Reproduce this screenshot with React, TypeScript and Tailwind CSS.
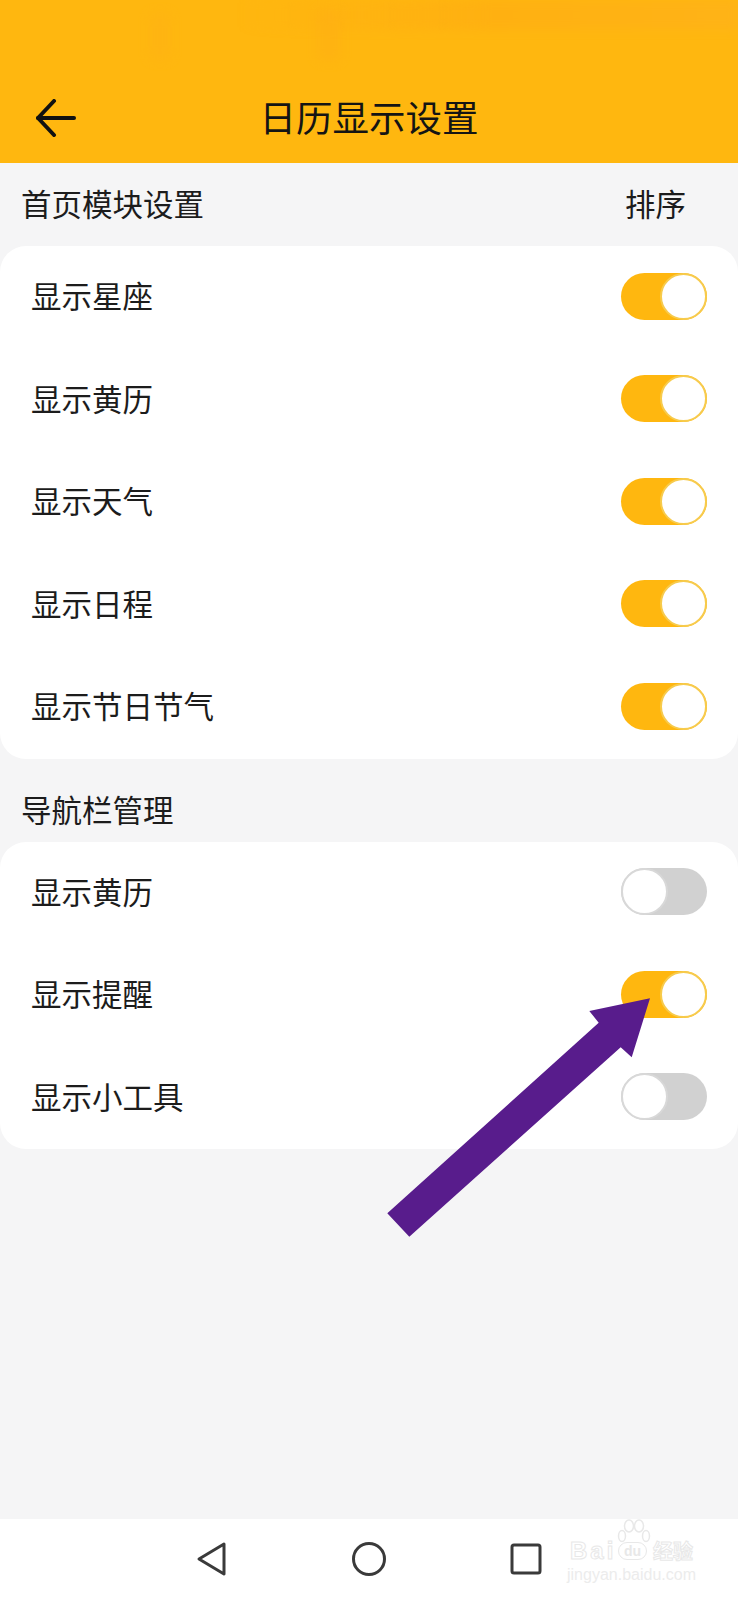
const homeRows = ["显示星座", "显示黄历", "显示天气", "显示日程", "显示节日节气"];
const navRows = [
  { label: "显示黄历", on: false },
  { label: "显示提醒", on: true },
  { label: "显示小工具", on: false },
];

function Toggle({ on }: { on: boolean }) {
  return (
    <div
      className={`mb-[2px] flex h-[47px] w-[86px] items-center rounded-full ${
        on ? "justify-end bg-[#ffb70f]" : "justify-start bg-[#d1d1d1]"
      }`}
    >
      <div
        className={`h-[47px] w-[47px] rounded-full border-[2px] bg-white ${
          on ? "border-[#f7cb4d]" : "border-[#d8d8d8]"
        }`}
      />
    </div>
  );
}

function Row({ label, on }: { label: string; on: boolean }) {
  return (
    <div className="flex h-[102.5px] items-center justify-between pl-[31px] pr-[31px]">
      <span className="pb-[4px] text-[30.5px] leading-none text-[#1c1c1c]">{label}</span>
      <Toggle on={on} />
    </div>
  );
}

export default function App() {
  return (
    <div className="relative flex h-[1600px] w-[738px] flex-col overflow-hidden bg-[#f5f5f6] font-['Noto_Sans_CJK_SC','Noto_Sans',sans-serif]">
      {/* header */}
      <div className="relative grid h-[163px] grid-cols-[1fr_auto_1fr] items-center overflow-hidden bg-[#ffb70f] pt-[73px] pr-[36px] pl-[36px]">
        {/* streaks at the top of the image */}
        <div className="absolute top-0 right-0 h-[30px] w-[500px] bg-gradient-to-r from-transparent via-[#ffae12] to-[#ffb21a] opacity-70 blur-[5px]" />
        <div className="absolute top-[14px] left-[150px] h-[45px] w-[20px] bg-[#ffb016] opacity-40 blur-[6px]" />
        <div className="absolute top-[10px] left-[318px] h-[50px] w-[22px] bg-[#ffac16] opacity-40 blur-[6px]" />
        <svg className="relative" width="40" height="38" viewBox="0 0 40 38" fill="none" stroke="#111" strokeWidth="4" strokeLinecap="round" strokeLinejoin="round">
          <path d="M18 2 L2 19 L18 36" />
          <path d="M2 19 H38" />
        </svg>
        <h1 className="relative pb-[1px] text-[36.5px] leading-none text-[#141414]">日历显示设置</h1>
        <div />
      </div>

      <div className="flex h-[83px] items-center justify-between pb-[2px] pl-[21px] pr-[52px]">
        <span className="text-[30.5px] leading-none text-[#1c1c1c]">首页模块设置</span>
        <span className="text-[30.5px] leading-none text-[#1c1c1c]">排序</span>
      </div>
      <div className="rounded-[26px] bg-white">
        {homeRows.map((label) => (
          <Row key={label} label={label} on />
        ))}
      </div>

      <div className="flex h-[83px] items-center pl-[21px] pt-[18px]">
        <span className="text-[30.5px] leading-none text-[#1c1c1c]">导航栏管理</span>
      </div>
      <div className="rounded-[26px] bg-white">
        {navRows.map((row) => (
          <Row key={row.label} label={row.label} on={row.on} />
        ))}
      </div>

      <div className="flex-1" />

      {/* bottom nav */}
      <div className="relative flex h-[81px] items-center bg-white pb-[2px] pl-[196px]">
        <svg width="32" height="36" viewBox="0 0 32 36" fill="none" stroke="#3a3a3a" strokeWidth="3" strokeLinejoin="round">
          <path d="M28 3 L3 18 L28 33 Z" />
        </svg>
        <svg className="ml-[124px]" width="34" height="34" viewBox="0 0 34 34" fill="none" stroke="#3a3a3a" strokeWidth="3">
          <circle cx="17" cy="17" r="15.5" />
        </svg>
        <svg className="ml-[124px]" width="32" height="32" viewBox="0 0 32 32" fill="none" stroke="#3a3a3a" strokeWidth="3" strokeLinejoin="round">
          <rect x="2" y="2" width="28" height="28" rx="2" />
        </svg>

        {/* watermark */}
        <div className="absolute left-[567px] top-0 flex w-[132px] flex-col">
          <svg className="absolute left-[50px] top-0" width="34" height="26" viewBox="0 0 34 26" fill="none" stroke="#e8e8e8" strokeWidth="1.5">
            <ellipse cx="5" cy="17" rx="3.5" ry="5.5" />
            <ellipse cx="12" cy="7" rx="4.5" ry="6" />
            <ellipse cx="22" cy="7" rx="4.5" ry="6" />
            <ellipse cx="29" cy="17" rx="3.5" ry="5.5" />
          </svg>
          <div className="mt-[23px] flex h-[18px] items-center">
            <span className="ml-[3px] w-[48px] font-['Liberation_Sans',sans-serif] text-[24px] leading-none font-bold tracking-[3px] text-white [-webkit-text-stroke:1px_#e8e8e8]">Bai</span>
            <span className="flex h-[18px] w-[29px] items-center justify-center rounded-full border border-[#e8e8e8] font-['Liberation_Sans',sans-serif] text-[14px] font-bold text-[#e8e8e8]">du</span>
            <span className="ml-[6px] text-[20px] leading-none font-bold text-white [-webkit-text-stroke:1px_#e8e8e8]">经验</span>
          </div>
          <span className="mt-[7px] font-['Liberation_Sans',sans-serif] text-[16px] leading-none text-[#ececec]">jingyan.baidu.com</span>
        </div>
      </div>

      {/* purple annotation arrow */}
      <svg className="absolute left-0 top-0" width="738" height="1600" viewBox="0 0 738 1600">
        <polygon
          fill="#581c8c"
          points="387.3,1213.3 409.3,1236.7 620.7,1047.3 631.7,1057.3 650,998.3 589.3,1011 598.7,1022.7"
        />
      </svg>
    </div>
  );
}
